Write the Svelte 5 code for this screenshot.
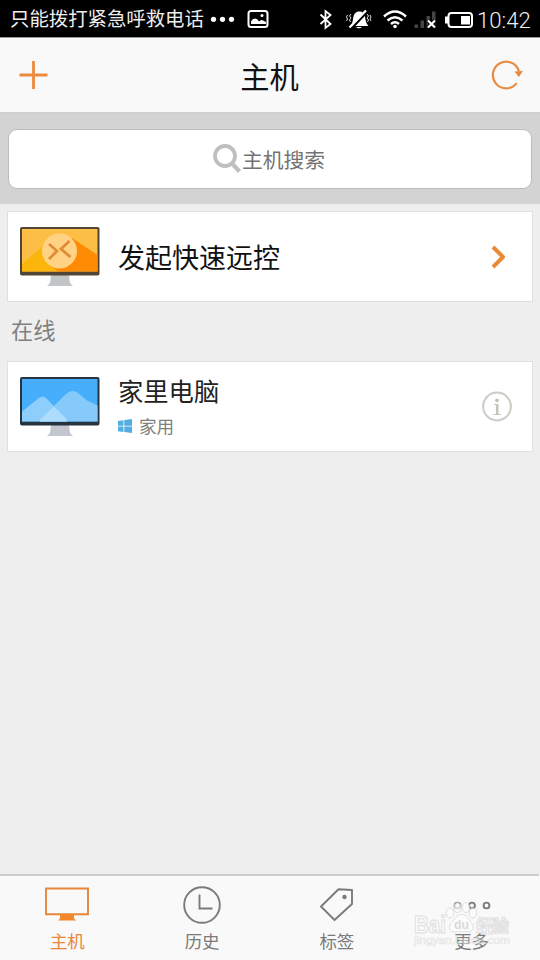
<script lang="ts">
	const tabs = [
		{ id: 'host', label: '主机' },
		{ id: 'history', label: '历史' },
		{ id: 'tag', label: '标签' },
		{ id: 'more', label: '更多' }
	];
	let active = $state('host');
</script>

<div class="screen">
	<div class="status">
		<span class="carrier">只能拨打紧急呼救电话</span>
		<svg class="notices" width="64" height="38" viewBox="0 0 64 38">
			<g fill="#fff">
				<circle cx="8.500" cy="19.3" r="2.6" />
				<circle cx="17.500" cy="19.3" r="2.6" />
				<circle cx="26.500" cy="19.3" r="2.6" />
				<path d="M46 24v-2.500q1.500-3 4-3 2.500 0 4 3 2-2.500 4-1l3 1.500v2z" />
				<circle cx="57" cy="15.500" r="1.500" />
			</g>
			<rect x="43.500" y="11" width="19" height="16" rx="2.500" fill="none" stroke="#fff" stroke-width="2" />
		</svg>
		<svg class="signals" width="160" height="38" viewBox="316 0 160 38">
			<path d="M320.500 14.500l10 9.500-5 4V11l5 4-10 9" fill="none" stroke="#fff" stroke-width="1.800" />
			<path d="M350 26c4-3 2-8 4.500-12 1.500-2 3-2.500 5-2.500 3 0 5 2 5.500 5 .5 4 1 7 3.500 9.500z" fill="#fff" />
			<path d="M356 27h6q-3 2.500-6 0z" fill="#fff" />
			<path d="M351 29l16-17" stroke="#000" stroke-width="2.500" />
			<path d="M349.500 27.500L366 10.500" stroke="#fff" stroke-width="2.200" />
			<path d="M351 14l-1.500 2 1.500 2-1.500 2 1 2M347.500 15l-1 2 1 2-1 2M367 14l1.500 2-1.500 2 1.500 2-1 2M370 15l1 2-1 2 1 2" fill="none" stroke="#ddd" />
			<g fill="none" stroke="#fff" stroke-width="2.500">
				<path d="M384 16.500q11-10 22 0M387.500 20.500q7.500-6.500 15 0M391 24q4-3.500 8 0" />
			</g>
			<circle cx="395" cy="26.500" r="1.800" fill="#fff" />
			<g fill="#444">
				<rect x="414.500" y="24.500" width="3.500" height="3.500" />
				<rect x="420.500" y="20.500" width="3.500" height="7.500" />
				<rect x="426.500" y="16" width="3.500" height="12" />
				<rect x="432" y="11.500" width="3.500" height="16.500" />
			</g>
			<path d="M428 20.500l7 7m0-7l-7 7" stroke="#000" stroke-width="4" />
			<path d="M428 20.500l7 7m0-7l-7 7" stroke="#fff" stroke-width="2.200" />
			<rect x="448.500" y="13" width="23.500" height="14" rx="3" fill="none" stroke="#fff" stroke-width="2" />
			<path d="M448 16.500h-3v7h3z" fill="#fff" />
			<rect x="461" y="16" width="9" height="8.500" fill="#fff" />
		</svg>
		<span class="time">10:42</span>
	</div>

	<header>
		<svg width="30" height="30" viewBox="0 0 30 30">
			<path d="M.5 15h28M14.500 1v28" stroke="#ec8a3c" stroke-width="2.800" />
		</svg>
		<h1>主机</h1>
		<svg width="34" height="32" viewBox="0 0 34 32">
			<path d="M25.700 24.200A13.300 13.300 0 1 1 28 12.500" fill="none" stroke="#e68c43" stroke-width="2.200" />
			<path d="M23.500 12.500l8.500-.5-4.200 6z" fill="#e68a40" />
		</svg>
	</header>

	<div class="search">
		<div class="search-box">
			<svg width="29" height="30" viewBox="0 0 29 30">
				<circle cx="12" cy="12" r="10" fill="none" stroke="#bfbfbf" stroke-width="3.800" />
				<path d="M19.500 20l7 7.500" stroke="#bfbfbf" stroke-width="4.200" />
			</svg>
			<span>主机搜索</span>
		</div>
	</div>

	<main>
		<div class="card">
			<svg width="80" height="60" viewBox="0 0 80 60">
				<path d="M31 48h18l1 8 3 3H27l3-3z" fill="#c2c5c8" />
				<rect width="79.500" height="48.500" rx="2" fill="#514538" />
				<path d="M2 2h75.500v42.500H2z" fill="#fdbe45" />
				<path d="M2 37l22-19 15 26.500H2z" fill="#fbb50b" />
				<path d="M52 11l25.500 17v16.500H38l-8-6z" fill="#ff8a04" />
				<circle cx="39.500" cy="24" r="17.500" fill="#ffd383" />
				<path d="M29 17l8 7-8 8M49.500 14l-8.500 8 9.500 8" fill="none" stroke="#e08b37" stroke-width="2.800" />
			</svg>
			<span class="quick">发起快速远控</span>
			<svg class="end" width="42" height="30" viewBox="0 0 42 30">
				<path d="M11 5l10 10-10 10" fill="none" stroke="#e88a3a" stroke-width="4" stroke-linejoin="round" />
			</svg>
		</div>

		<h2>在线</h2>

		<div class="card">
			<svg width="80" height="60" viewBox="0 0 80 60">
				<path d="M31 48h18l1 8 3 3H27l3-3z" fill="#c3c6ce" />
				<rect width="79.500" height="48.500" rx="2" fill="#263440" />
				<path d="M2 2h75.500v42.500H2z" fill="#47aefb" />
				<path d="M2 34.500L19 21q3.500-2.500 7 0l20 20.500 1 3H2z" fill="#8dcefc" />
				<path d="M20 44.500v-2L46 17q6-5.500 12-1l9 7.500 10.500 5v16z" fill="#86cafb" />
				<path d="M20 42.500l14-13L46 41.500l1 3H20z" fill="#aedcfc" />
			</svg>
			<div class="info">
				<span class="name">家里电脑</span>
				<span class="group">
					<svg width="14" height="14" viewBox="0 0 14 14">
						<path d="M0 2l5.500-.8v5.500H0zM6.300 1L14 0v6.700H6.300zM0 7.500h5.500V13L0 12.200zM6.300 7.500H14V14l-7.700-1z" fill="#52ade0" />
					</svg>
					家用
				</span>
			</div>
			<svg class="end" width="42" height="32" viewBox="0 0 42 32">
				<circle cx="15" cy="15.500" r="13.900" fill="none" stroke="#cdcbc6" stroke-width="2" />
				<circle cx="15" cy="9.300" r="1.900" fill="#c6c3bd" />
				<path d="M12 13h4.500v10H19v1h-7.500v-1H14v-9h-2z" fill="#c6c3bd" />
			</svg>
		</div>
	</main>

	<nav>
		{#each tabs as tab}
			<button class:active={active === tab.id} onclick={() => (active = tab.id)}>
				<svg width="46" height="42" viewBox="0 0 46 42" fill="none" stroke="currentColor" stroke-width="1.900">
					{#if tab.id === 'host'}
						<path d="M2 5.500h42v25.800H2z" />
						<path d="M16 31.500h14v4l2 2H14l2-2z" fill="#f5872b" stroke="none" />
					{:else if tab.id === 'history'}
						<circle cx="23" cy="22" r="17.800" />
						<path d="M20.500 11.500v14h13" />
					{:else if tab.id === 'tag'}
						<path d="M7 23.500L24.500 6.200l13.500.8v14L20.500 37z" stroke-linejoin="round" />
						<circle cx="30.500" cy="14" r="2.200" fill="currentColor" stroke="none" />
					{:else}
						<circle cx="8.500" cy="22.500" r="2.900" />
						<circle cx="23" cy="22.500" r="2.900" />
						<circle cx="37.500" cy="22.500" r="2.900" />
					{/if}
				</svg>
				<span>{tab.label}</span>
			</button>
		{/each}
	</nav>

	<svg class="watermark" width="104" height="52" viewBox="0 0 104 52">
		<g fill="#fcfcfc" stroke="#d3d3d3" stroke-width="1">
			<text x="4" y="35" font-size="23" font-weight="700" textLength="32" lengthAdjust="spacingAndGlyphs">Bai</text>
			<ellipse cx="40" cy="15" rx="3.800" ry="5" />
			<ellipse cx="47.500" cy="9.500" rx="3.800" ry="5" />
			<ellipse cx="56" cy="9.500" rx="3.800" ry="5" />
			<ellipse cx="63" cy="15" rx="3.800" ry="5" />
			<path d="M51.500 16.500c6 0 7 5 10 8 4 5 1 10-4 9.500-4-.5-8-.5-12 0-6 .5-8-5-4-9.500 4-3 4-8 10-8z" />
			<text x="66" y="33.500" font-size="17" font-weight="700" textLength="33">经验</text>
		</g>
		<text x="44" y="31" font-size="13" font-weight="700" fill="#cdcdcd" textLength="15" lengthAdjust="spacingAndGlyphs">du</text>
		<text x="4" y="46" font-size="11" fill="none" stroke="#dedede" stroke-width=".6" textLength="96" lengthAdjust="spacingAndGlyphs">jingyan.baidu.com</text>
	</svg>
</div>

<style>
	:global(body) {
		margin: 0;
	}
	.screen {
		position: relative;
		display: flex;
		flex-direction: column;
		width: 540px;
		height: 960px;
		overflow: hidden;
		background: #eee;
		font-family: 'Noto Sans CJK SC', sans-serif;
	}
	svg {
		display: block;
		flex-shrink: 0;
	}
	.status {
		display: flex;
		align-items: center;
		height: 37px;
		padding-left: 10px;
		background: #000;
		color: #eee;
		white-space: nowrap;
	}
	.carrier {
		width: 194px;
		font-size: 19.4px;
		line-height: 35px;
		padding-bottom: 2px;
	}
	.notices {
		margin-left: 1px;
	}
	.signals {
		margin-left: auto;
	}
	.time {
		width: 63px;
		margin-left: 1px;
		font-family: Roboto, sans-serif;
		font-size: 22.200px;
		font-weight: 300;
		padding-top: 2px;
	}
	header {
		display: flex;
		align-items: center;
		justify-content: space-between;
		box-sizing: border-box;
		height: 76px;
		padding: 0 15px 0 19px;
		background: #f9f9f9;
		border-top: 1px solid #999;
		border-bottom: 1px solid #cfcfcf;
	}
	h1 {
		margin: 0 1px 0 0;
		font-size: 29.300px;
		font-weight: 400;
		line-height: 40px;
		color: #111;
	}
	.search {
		box-sizing: border-box;
		height: 91px;
		padding: 16px 8px 15px;
		background: #d3d3d3;
	}
	.search-box {
		display: flex;
		align-items: center;
		justify-content: center;
		box-sizing: border-box;
		height: 60px;
		padding-right: 2px;
		border: 1px solid #bcbcbc;
		border-radius: 9px;
		background: #fff;
		color: #737373;
		font-size: 20.800px;
	}
	.search-box span {
		padding-bottom: 1px;
	}
	main {
		flex: 1;
		padding: 7px 7px 0;
	}
	.card {
		display: flex;
		align-items: center;
		box-sizing: border-box;
		height: 91px;
		padding-left: 12px;
		background: #fff;
		border: 1px solid #e0e0e0;
	}
	.quick {
		margin-left: 18px;
		font-size: 27px;
		color: #111;
	}
	.end {
		margin-left: auto;
		margin-right: 8px;
	}
	h2 {
		margin: 0;
		padding-left: 4px;
		height: 59px;
		font-size: 22.300px;
		font-weight: 400;
		line-height: 55px;
		color: #808080;
	}
	.info {
		display: flex;
		flex-direction: column;
		margin-left: 18px;
		padding-top: 3px;
	}
	.name {
		font-size: 25.300px;
		line-height: 36px;
		color: #222;
	}
	.group {
		display: flex;
		align-items: center;
		gap: 7px;
		font-size: 17.600px;
		line-height: 36px;
		color: #808080;
	}
	nav {
		display: flex;
		box-sizing: border-box;
		width: 539px;
		height: 86px;
		border-top: 2px solid #ccc;
		background: #f9f9f9;
		box-shadow: 1px 0 #f9f9f9;
	}
	button {
		flex: 1;
		display: flex;
		flex-direction: column;
		align-items: center;
		padding: 7px 0 0;
		border: 0;
		background: none;
		font-family: inherit;
		font-size: 17.500px;
		line-height: 31px;
		color: #7b7b7b;
	}
	button.active {
		color: #e8863a;
	}
	.watermark {
		position: absolute;
		right: 26px;
		bottom: 10px;
		opacity: 0.7;
		font-family: 'Liberation Sans', 'Noto Sans CJK SC', sans-serif;
		pointer-events: none;
	}
</style>
